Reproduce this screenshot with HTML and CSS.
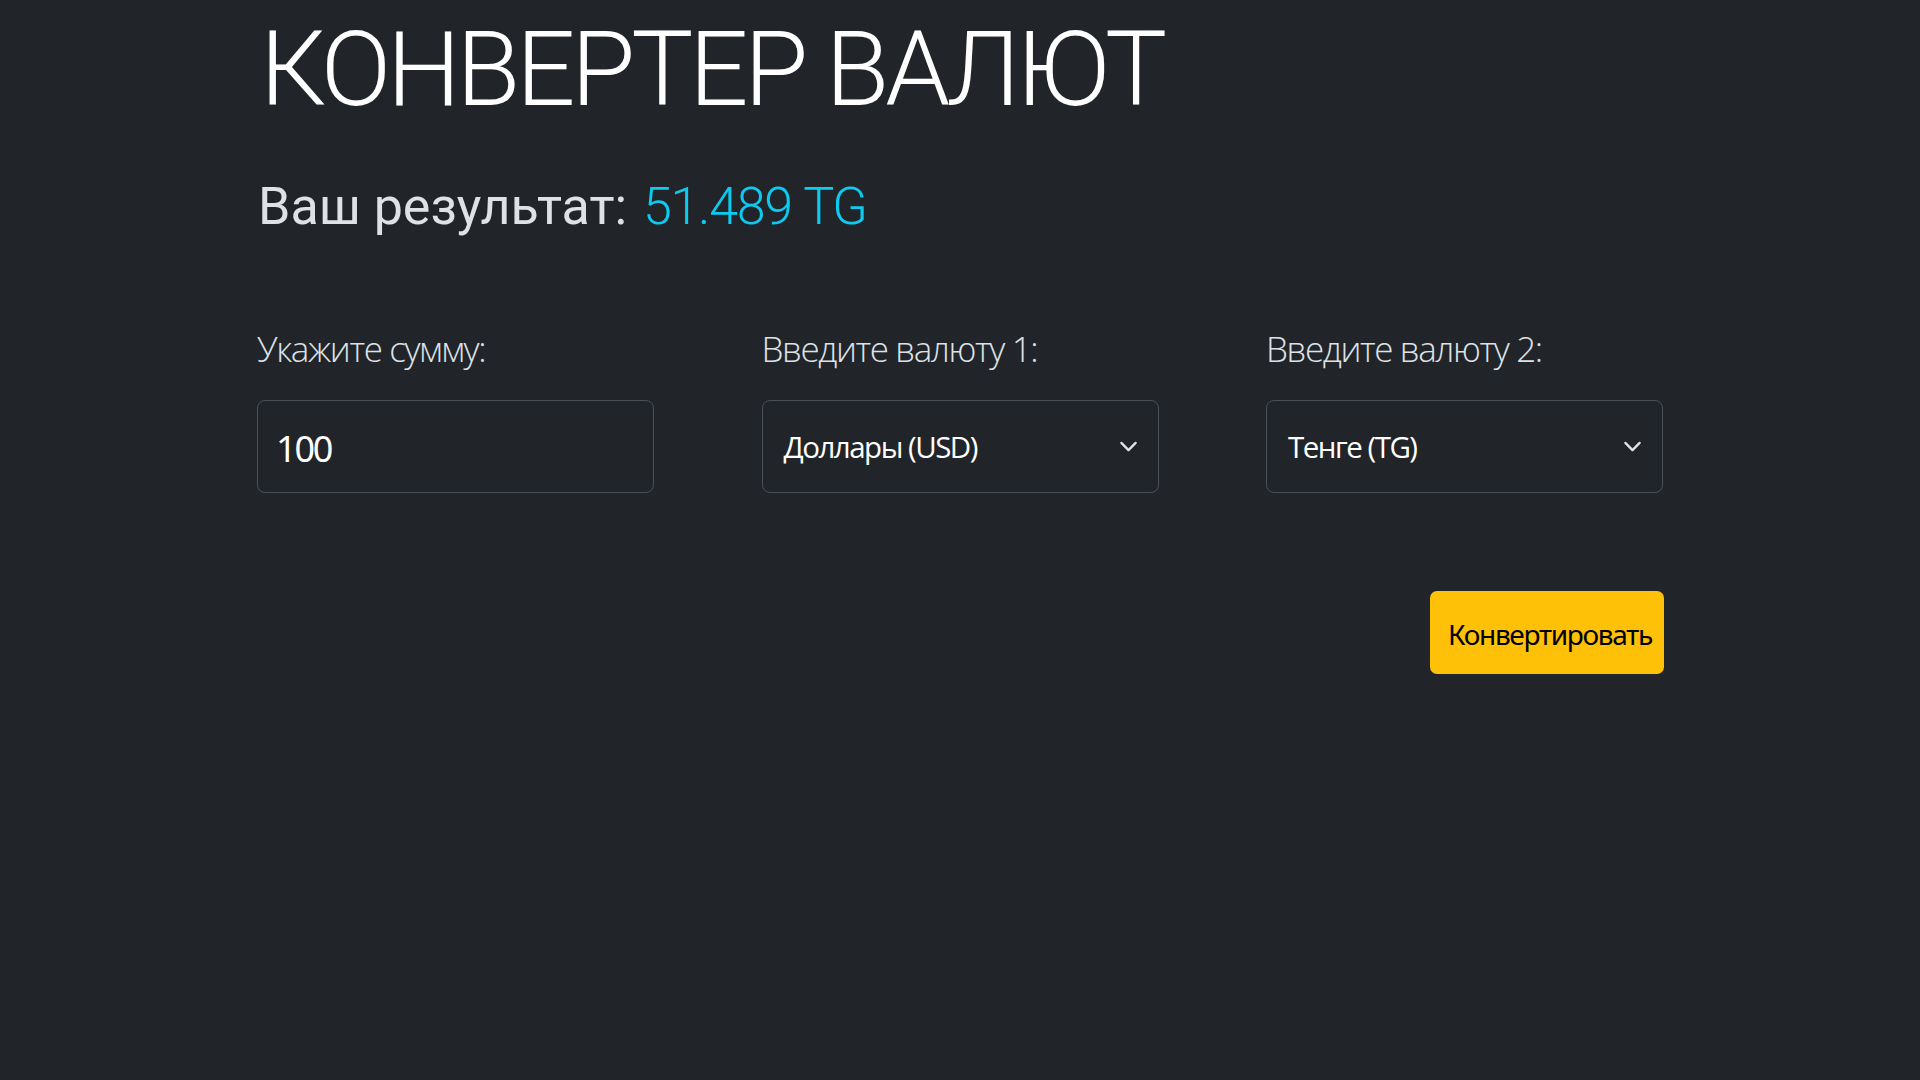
FILE: index.html
```html
<!DOCTYPE html>
<html lang="ru">
<head>
<meta charset="utf-8">
<title>Конвертер валют</title>
<link rel="stylesheet" href="styles.css">
</head>
<body>
<main class="container">
  <h1 class="title">КОНВЕРТЕР ВАЛЮТ</h1>
  <h2 class="result">Ваш результат: <span class="result-value">51.489 TG</span></h2>
  <form class="form-grid">
    <div class="field">
      <label class="field-label" for="amount">Укажите сумму:</label>
      <div class="box input-box"><span class="input-value">100</span></div>
    </div>
    <div class="field">
      <label class="field-label">Введите валюту 1:</label>
      <div class="box select-box">
        <span class="select-value">Доллары (USD)</span>
        <svg class="chevron" viewBox="0 0 16 16" width="19" height="19" aria-hidden="true"><path d="M2 5l6 6 6-6" fill="none" stroke="#dee2e6" stroke-width="2" stroke-linecap="round" stroke-linejoin="round"/></svg>
      </div>
    </div>
    <div class="field">
      <label class="field-label">Введите валюту 2:</label>
      <div class="box select-box">
        <span class="select-value">Тенге (TG)</span>
        <svg class="chevron" viewBox="0 0 16 16" width="19" height="19" aria-hidden="true"><path d="M2 5l6 6 6-6" fill="none" stroke="#dee2e6" stroke-width="2" stroke-linecap="round" stroke-linejoin="round"/></svg>
      </div>
    </div>
  </form>
  <div class="actions">
    <button class="btn-convert" type="button">Конвертировать</button>
  </div>
</main>
</body>
</html>
```
FILE: styles.css
```css
html, body {
  margin: 0;
  padding: 0;
  background: #212529;
  color: #dee2e6;
  font-family: Roboto, "Open Sans", sans-serif;
}

.container {
  width: 1406px;
  margin: 0 auto;
  padding-top: 8px;
}

.title {
  margin: 0;
  font-size: 104px;
  font-weight: 300;
  line-height: 124.8px;
  letter-spacing: -4.1px;
  color: #fff;
  padding-left: 3px;
}

.result {
  margin: 43px 0 0;
  font-size: 52px;
  font-weight: 400;
  line-height: 62.4px;
  color: #dee2e6;
  padding-left: 1px;
}

.result-value {
  color: #0dcaf0;
  font-weight: 300;
  letter-spacing: -1.3px;
  margin-left: 3px;
}

.form-grid {
  margin-top: 83.6px;
  display: grid;
  grid-template-columns: repeat(3, 397px);
  justify-content: space-between;
}

.field {
  display: flex;
  flex-direction: column;
}

.field-label {
  font-family: "Open Sans", sans-serif;
  font-size: 35px;
  font-weight: 300;
  letter-spacing: -1.4px;
  line-height: 54px;
  color: #dee2e6;
  margin-bottom: 24px;
}

.box {
  box-sizing: border-box;
  height: 93px;
  border: 1px solid #495057;
  border-radius: 8px;
  background: #212529;
  display: flex;
  align-items: center;
}

.input-box {
  padding: 4px 18px 0;
}

.input-value {
  font-family: "Noto Sans", sans-serif;
  font-size: 36px;
  letter-spacing: -2.2px;
  color: #fff;
}

.select-box {
  padding: 0 20px 0 21px;
  justify-content: space-between;
}

.select-value {
  font-family: "Open Sans", sans-serif;
  font-size: 29.5px;
  letter-spacing: -1.5px;
  color: #fff;
}

.chevron {
  display: block;
}

.actions {
  display: flex;
  justify-content: flex-end;
  margin-top: 98px;
}

.btn-convert {
  width: 234px;
  height: 83px;
  border: none;
  border-radius: 7px;
  background: #ffc107;
  color: #000;
  font-family: "Noto Sans", sans-serif;
  font-size: 28px;
  letter-spacing: -1.3px;
  padding: 4px 0 0 6px;
  margin-right: -1px;
  cursor: pointer;
}
```
